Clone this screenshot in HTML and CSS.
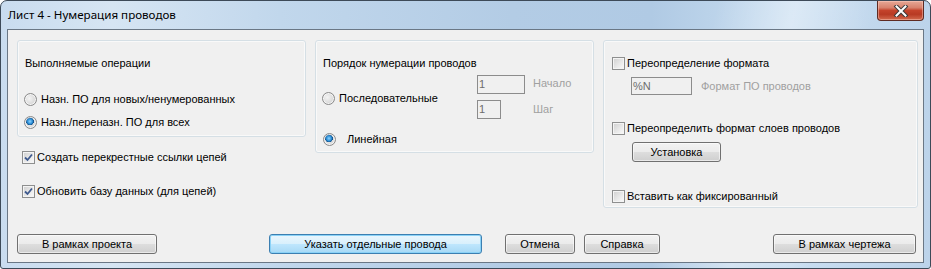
FILE: index.html
```html
<!DOCTYPE html>
<html lang="ru">
<head>
<meta charset="utf-8">
<title>Лист 4 - Нумерация проводов</title>
<link rel="stylesheet" href="styles.css">
</head>
<body>
<div class="window">
  <div class="titlebar">
    <span class="title">Лист 4 - Нумерация проводов</span>
    <div class="close">
      <svg width="18" height="12" viewBox="0 0 18 12">
        <path d="M4.5 1.5 L13.5 10.5 M13.5 1.5 L4.5 10.5" stroke="#3b3b3b" stroke-width="4" stroke-linecap="square" fill="none"/>
        <path d="M4.5 1.5 L13.5 10.5 M13.5 1.5 L4.5 10.5" stroke="#ffffff" stroke-width="2" stroke-linecap="square" fill="none"/>
      </svg>
    </div>
  </div>
  <div class="client">
    <div class="top">
      <div class="col-left">
        <div class="group g1">
          <div class="gtitle">Выполняемые операции</div>
          <div class="row radio-row r1"><span class="radio"></span><span class="lbl">Назн. ПО для новых/ненумерованных</span></div>
          <div class="row radio-row r2"><span class="radio checked"></span><span class="lbl">Назн./переназн. ПО для всех</span></div>
        </div>
        <div class="row check-row c1"><span class="check checked"><svg width="9" height="9" viewBox="0 0 9 9"><path d="M1 4.5 L3.5 7 L8 1.5" stroke="#3f5a8e" stroke-width="1.8" fill="none"/></svg></span><span class="lbl">Создать перекрестные ссылки цепей</span></div>
        <div class="row check-row c2"><span class="check checked"><svg width="9" height="9" viewBox="0 0 9 9"><path d="M1 4.5 L3.5 7 L8 1.5" stroke="#3f5a8e" stroke-width="1.8" fill="none"/></svg></span><span class="lbl">Обновить базу данных (для цепей)</span></div>
      </div>
      <div class="group g2">
        <div class="gtitle">Порядок нумерации проводов</div>
        <div class="seq">
          <div class="row radio-row seq-radio"><span class="radio"></span><span class="lbl">Последовательные</span></div>
          <div class="fields">
            <div class="tbox w48">1</div><span class="dis">Начало</span>
            <div class="tbox w24">1</div><span class="dis">Шаг</span>
          </div>
        </div>
        <div class="row radio-row lin"><span class="radio checked"></span><span class="lbl lin-lbl">Линейная</span></div>
      </div>
      <div class="group g3">
        <div class="row check-row k1"><span class="check"></span><span class="lbl">Переопределение формата</span></div>
        <div class="fmt"><div class="tbox w61">%N</div><span class="dis">Формат ПО проводов</span></div>
        <div class="row check-row k2"><span class="check"></span><span class="lbl">Переопределить формат слоев проводов</span></div>
        <button class="btn setup">Установка</button>
        <div class="row check-row k3"><span class="check"></span><span class="lbl">Вставить как фиксированный</span></div>
      </div>
    </div>
    <div class="buttons">
      <button class="btn b-proj">В рамках проекта</button>
      <button class="btn default b-wires">Указать отдельные провода</button>
      <button class="btn b-cancel">Отмена</button>
      <button class="btn b-help">Справка</button>
      <button class="btn b-draw">В рамках чертежа</button>
    </div>
  </div>
</div>
</body>
</html>
```

FILE: styles.css
```css
* { box-sizing: border-box; }
html, body { margin: 0; padding: 0; background: #ffffff; }
body { width: 931px; height: 269px; overflow: hidden; }

.window {
  width: 931px;
  height: 269px;
  border: 1px solid #3d4a58;
  border-radius: 7px 7px 3px 3px;
  padding: 0 6px 5px 6px;
  display: flex;
  flex-direction: column;
  background:
    linear-gradient(104deg, rgba(255,255,255,0) 0%, rgba(255,255,255,0) 72%, rgba(255,255,255,0.35) 80%, rgba(255,255,255,0) 88%),
    linear-gradient(90deg, #c9dcef 0%, #d6e5f3 12%, #c1d7ec 30%, #b3cce5 55%, #b0cae4 70%, #c9def1 85%, #bcd3ea 100%);
  font-family: "Liberation Sans", Arial, sans-serif;
  font-size: 11px;
  color: #000;
  overflow: hidden;
}

.titlebar {
  height: 28px;
  flex: none;
  display: flex;
  align-items: flex-start;
  justify-content: space-between;
}
.title {
  font-family: "Noto Sans", "Open Sans", sans-serif;
  font-size: 11.6px;
  line-height: 16px;
  margin-top: 6px;
  padding-left: 1px;
  color: #000;
}
.close {
  width: 47px;
  height: 20px;
  margin-top: 0;
  border: 1px solid #5e2a22;
  border-top: none;
  border-radius: 0 0 4px 4px;
  background: linear-gradient(180deg, #e7a896 0%, #d8826d 35%, #c4432b 50%, #b83a23 70%, #d26a4e 100%);
  box-shadow: inset 0 0 0 1px rgba(255,210,200,0.45);
  display: flex;
  align-items: center;
  justify-content: center;
}
.close svg { display: block; }

.client {
  flex: 1;
  border: 1px solid #6a7785;
  background: #f0f0f0;
  display: flex;
  flex-direction: column;
}

.top {
  display: flex;
  align-items: flex-start;
  gap: 9px;
  padding: 10px 0 0 9px;
}

.group {
  border: 1px solid #d5dfe5;
  border-radius: 3px;
  box-shadow: inset 0 0 0 1px rgba(255,255,255,0.6);
}
.col-left { width: 289px; display: flex; flex-direction: column; }
.g1 { width: 289px; height: 97px; padding: 16px 0 0 0; }
.g2 { width: 279px; height: 113px; padding: 16px 0 0 0; }
.g3 { width: 315px; height: 168px; padding: 16px 0 0 0; }

.gtitle { line-height: 13px; height: 13px; padding-left: 7px; white-space: nowrap; }

.row { display: flex; align-items: center; height: 13px; line-height: 13px; white-space: nowrap; }
.lbl { line-height: 13px; }

.radio {
  width: 13px; height: 13px;
  border-radius: 50%;
  border: 1px solid #8a8a8a;
  background: radial-gradient(circle at 40% 40%, #f4f4f4 0%, #dadada 60%, #cbcbcb 100%);
  box-shadow: inset 0 0 0 1px rgba(255,255,255,0.7);
  flex: none;
}
.radio.checked {
  background:
    radial-gradient(circle at 45% 40%, #8fd3ff 0%, #2b8ed6 28%, #144f86 42%, rgba(0,0,0,0) 46%),
    radial-gradient(circle at 40% 40%, #f4f4f4 0%, #dadada 60%, #cbcbcb 100%);
}
.check {
  width: 13px; height: 13px;
  border: 1px solid #8e8f8f;
  background: linear-gradient(135deg, #cfcfcf 0%, #e6e6e6 50%, #fbfbfb 100%);
  box-shadow: inset 0 0 0 1px #f4f4f4;
  flex: none;
  display: flex;
  align-items: center;
  justify-content: center;
}
.check svg { display: block; }

/* group 1 */
.r1 { margin: 23px 0 0 6px; }
.r2 { margin: 10px 0 0 6px; }
.radio-row .lbl { margin-left: 4px; }

/* left checkboxes */
.c1 { margin: 14px 0 0 5px; }
.c2 { margin: 21px 0 0 5px; }
.check-row .lbl { margin-left: 2px; }

/* group 2 */
.seq { display: flex; align-items: center; margin-top: 5px; height: 44px; }
.seq-radio { width: 155px; margin-left: 6px; padding-top: 2px; }
.fields {
  display: grid;
  grid-template-columns: 56px auto;
  row-gap: 6px;
  align-items: center;
}
.tbox {
  height: 19px;
  border: 1px solid #8c8c8c;
  background: #f0f0f0;
  color: #6d6d6d;
  line-height: 17px;
  padding-left: 1px;
}
.w48 { width: 48px; }
.w24 { width: 24px; }
.w61 { width: 61px; height: 18px; line-height: 16px; }
.dis { color: #a0a0a0; line-height: 13px; }
.fields .dis:first-of-type { margin-top: -2px; }
.lin { margin: 14px 0 0 7px; }
.lin .lin-lbl { margin-left: 11px; }

/* group 3 */
.k1 { margin: 0 0 0 8px; }
.fmt { display: flex; align-items: center; margin: 7px 0 0 27px; }
.fmt .dis { margin-left: 9px; }
.k2 { margin: 27px 0 0 8px; }
.setup { width: 89px; margin: 7px 0 0 28px; display: block; }
.k3 { margin: 28px 0 0 8px; }

/* buttons */
.btn {
  font-family: "Liberation Sans", Arial, sans-serif;
  font-size: 11px;
  color: #000;
  height: 20px;
  padding: 0;
  line-height: 18px;
  text-align: center;
  border: 1px solid #707070;
  border-radius: 3px;
  background: linear-gradient(180deg, #f2f2f2 0%, #ebebeb 48%, #dddddd 52%, #cfcfcf 100%);
  box-shadow: inset 0 0 0 1px rgba(255,255,255,0.55);
}
.btn.default {
  border-color: #3c7fb1;
  background: linear-gradient(180deg, #eaf6fd 0%, #d9f0fc 48%, #bee6fd 52%, #a7d9f5 100%);
  box-shadow: inset 0 0 0 1px #8ad2f7;
}
.buttons {
  margin-top: auto;
  display: flex;
  padding: 0 0 8px 9px;
}
.b-proj { width: 140px; }
.b-wires { width: 213px; margin-left: 112px; }
.b-cancel { width: 70px; margin-left: 23px; }
.b-help { width: 76px; margin-left: 9px; }
.b-draw { width: 143px; margin-left: 113px; }
```
